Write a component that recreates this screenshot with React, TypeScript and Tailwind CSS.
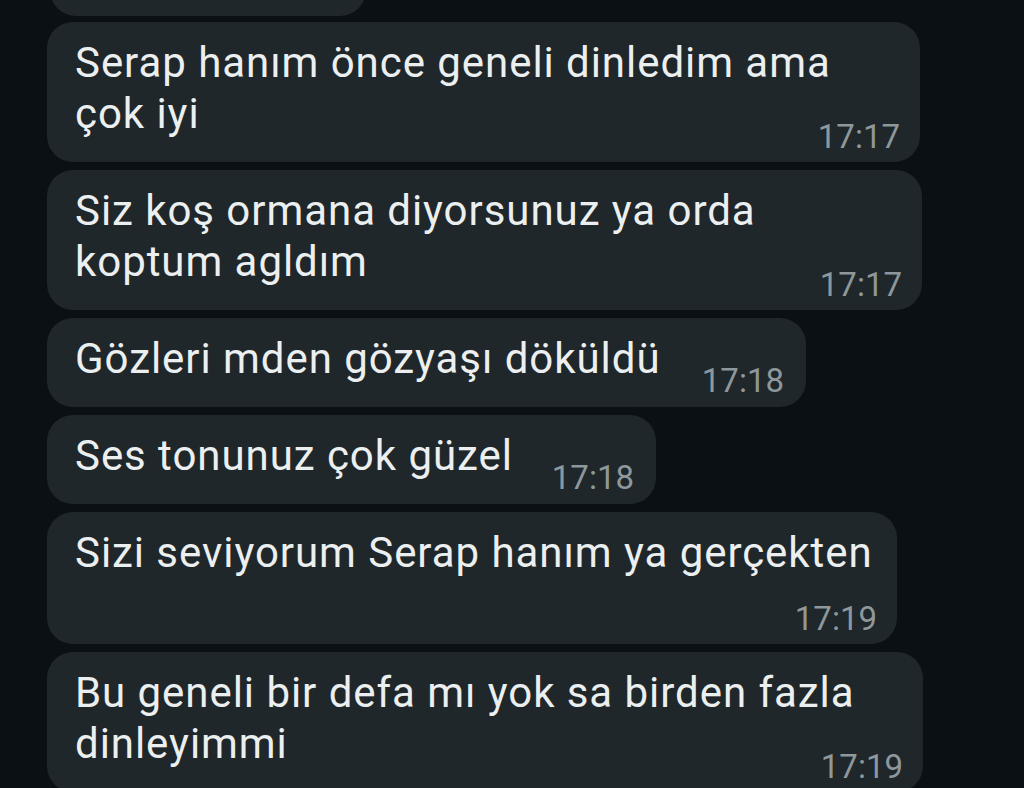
const font = { fontFamily: 'Roboto, "Noto Sans", sans-serif' };

type Msg = {
  lines: string[];
  time: string;
  width: string;
  kind: 'multi' | 'single' | 'wrap';
};

const messages: Msg[] = [
  { lines: ['Serap hanım önce geneli dinledim ama', 'çok iyi'], time: '17:17', width: 'w-[873px]', kind: 'multi' },
  { lines: ['Siz koş ormana diyorsunuz ya orda', 'koptum agldım'], time: '17:17', width: 'w-[875px]', kind: 'multi' },
  { lines: ['Gözleri mden gözyaşı döküldü'], time: '17:18', width: 'w-[759px]', kind: 'single' },
  { lines: ['Ses tonunuz çok güzel'], time: '17:18', width: 'w-[609px]', kind: 'single' },
  { lines: ['Sizi seviyorum Serap hanım ya gerçekten'], time: '17:19', width: 'w-[850px]', kind: 'wrap' },
  { lines: ['Bu geneli bir defa mı yok sa birden fazla', 'dinleyimmi'], time: '17:19', width: 'w-[876px]', kind: 'multi' },
];

function Time({ value, className }: { value: string; className?: string }) {
  return (
    <span className={`text-[33px] leading-[33px] text-[#8e979b] whitespace-nowrap ${className ?? ''}`}>
      {value}
    </span>
  );
}

function Bubble({ msg }: { msg: Msg }) {
  const text = (
    <p className="text-[42px] leading-[51px] tracking-[0.95px] text-[#eceff0] whitespace-nowrap">
      {msg.lines.map((l, i) => (
        <span key={i} className="block">{l}</span>
      ))}
    </p>
  );

  if (msg.kind === 'single') {
    return (
      <div className={`${msg.width} flex items-start rounded-[26px] bg-[#1f272a] pt-[15px] pb-[10px] pl-[28px] pr-[22px]`}>
        {text}
        <Time value={msg.time} className="ml-auto mt-[31px]" />
      </div>
    );
  }

  return (
    <div className={`${msg.width} flex flex-col rounded-[26px] bg-[#1f272a] pt-[15px] pb-[9px] pl-[28px] pr-[20px]`}>
      {text}
      <Time value={msg.time} className={msg.kind === 'multi' ? 'self-end -mt-[19px]' : 'self-end mt-[24px]'} />
    </div>
  );
}

export default function App() {
  return (
    <div className="w-[1024px] h-[788px] overflow-hidden bg-[#0b1014]" style={font}>
      <div className="flex flex-col items-start gap-[8px] pl-[47px]">
        {/* previous message, mostly scrolled out of view */}
        <div className="w-[316px] h-[60px] -mt-[44px] mb-[-2px] ml-[3px] flex flex-col justify-end rounded-[26px] bg-[#1f272a] pb-[13px] pr-[20px]">
          <Time value="17:16" className="self-end" />
        </div>
        {messages.map((m, i) => (
          <Bubble key={i} msg={m} />
        ))}
      </div>
    </div>
  );
}
